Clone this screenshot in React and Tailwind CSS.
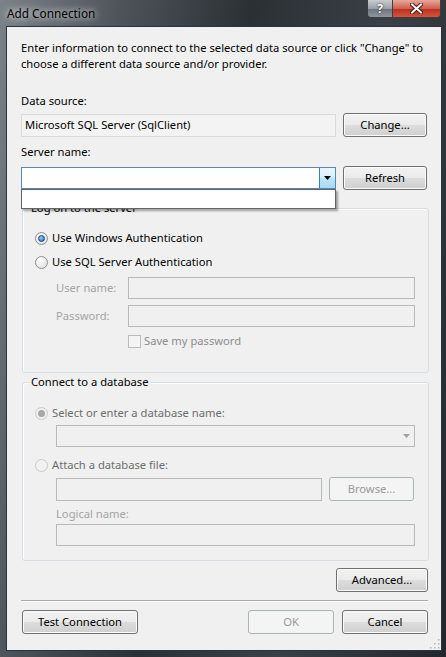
import React from 'react';

const font = "font-['Segoe_UI','Noto_Sans',sans-serif] text-[11.2px] leading-[16px]";

const btn =
  'flex items-center justify-center rounded-[3px] border border-[#707070] bg-[linear-gradient(to_bottom,#f2f2f2_0%,#ebebeb_50%,#dddddd_50%,#cfcfcf_100%)] shadow-[inset_0_0_0_1px_#fbfbfb] text-black';
const btnOff =
  'flex items-center justify-center rounded-[3px] border border-[#adb2b5] bg-[#f4f4f4] text-[#9a9a9a]';
const boxOff = 'border border-[#b9b9b9] bg-[#f0f0f0]';

const Radio = ({ checked, disabled }) => (
  <span
    className={`relative inline-flex h-[13px] w-[13px] items-center justify-center rounded-full border ${
      disabled
        ? 'border-[#c9c9c9] bg-[#f1f1f1]'
        : 'border-[#8e8f8f] bg-[radial-gradient(circle_at_35%_35%,#ffffff,#d9dadb)]'
    }`}
  >
    {checked && (
      <span
        className={`h-[7px] w-[7px] rounded-full ${
          disabled
            ? 'bg-[#a7a7a7]'
            : 'bg-[radial-gradient(circle_at_40%_35%,#8fd3ff,#1c5ea8)] border border-[#1a4a80]'
        }`}
      />
    )}
  </span>
);

const Legend = ({ children }) => (
  <span className="absolute left-[7px] top-[-9px] bg-[#f0f0f0] px-[1px] text-black">{children}</span>
);

export default function App() {
  return (
    <div
      className={`${font} relative h-[657px] w-[446px] overflow-hidden bg-[linear-gradient(100deg,#7c8287_0%,#4d5358_22%,#2b3035_45%,#3a4045_70%,#23272b_100%)]`}
    >
      {/* title bar */}
      <div className="flex h-[26px] items-start justify-between">
        <span className="ml-[7px] mt-[5px] text-[11.8px] text-black [text-shadow:0_0_6px_#ffffffcc,0_0_10px_#ffffff99]">
          Add Connection
        </span>
        <div className="mr-[5px] flex">
          <div className="flex h-[18px] w-[26px] items-center justify-center rounded-bl-[4px] border border-t-0 border-[#3a3f44] bg-[linear-gradient(to_bottom,#c8cdd1_0%,#9aa1a7_50%,#6c737a_51%,#8e969c_100%)] text-[12px] font-bold text-white [text-shadow:0_0_2px_#000]">
            ?
          </div>
          <div className="flex h-[18px] w-[48px] items-center justify-center rounded-br-[4px] border border-l-0 border-t-0 border-[#3a3f44] bg-[linear-gradient(to_bottom,#e7a89c_0%,#d0604e_50%,#b8301d_51%,#d5523b_100%)]">
            <svg width="13" height="11" viewBox="0 0 13 11">
              <path d="M2 1.5 L11 9.5 M11 1.5 L2 9.5" stroke="#3a1a14" strokeWidth="4" strokeLinecap="square" />
              <path d="M2 1.5 L11 9.5 M11 1.5 L2 9.5" stroke="#ffffff" strokeWidth="2" strokeLinecap="square" />
            </svg>
          </div>
        </div>
      </div>

      {/* client area */}
      <div className="relative ml-[6px] h-[625px] w-[436px] border border-[#2a3440] bg-[#f0f0f0]">
        <div className="ml-[14px] mt-[13px] whitespace-nowrap text-black">
          Enter information to connect to the selected data source or click "Change" to
          <br />
          choose a different data source and/or provider.
        </div>

        <div className="ml-[14px] mt-[21px] text-black">Data source:</div>
        <div className="ml-[14px] mt-[4px] flex items-center">
          <div className="flex h-[23px] w-[315px] items-center border border-[#dadada] bg-[#f3f3f3] pl-[3px] text-black">
            Microsoft SQL Server (SqlClient)
          </div>
          <div className={`${btn} ml-[7px] h-[24px] w-[84px]`}>Change...</div>
        </div>

        <div className="ml-[14px] mt-[7px] text-black">Server name:</div>
        <div className="ml-[14px] mt-[6px] flex items-center">
          <div className="relative h-[22px] w-[315px] border border-[#5a87b4] bg-white">
            <div className="absolute right-0 top-0 flex h-[20px] w-[16px] items-center justify-center border-l border-[#3c7fb1] bg-[linear-gradient(to_bottom,#eaf6fd_0%,#d9f0fc_45%,#bee6fd_50%,#a7d9f5_100%)]">
              <svg width="7" height="4" viewBox="0 0 7 4">
                <path d="M0 0 H7 L3.5 4 Z" fill="#000" />
              </svg>
            </div>
            <div className="absolute left-[-1px] top-[21px] z-10 h-[20px] w-[315px] border border-[#646464] bg-white shadow-[2px_2px_2px_rgba(0,0,0,0.35)]" />
          </div>
          <div className={`${btn} ml-[7px] h-[24px] w-[84px]`}>Refresh</div>
        </div>

        {/* log on group */}
        <div className="relative ml-[15px] mt-[18px] h-[165px] w-[407px] rounded-[3px] border border-[#d5dfe5] shadow-[inset_1px_1px_0_#ffffff]">
          <Legend>Log on to the server</Legend>
          <div className="ml-[12px] mt-[21px] flex items-center gap-[4px] text-black">
            <Radio checked />
            <span>Use Windows Authentication</span>
          </div>
          <div className="ml-[12px] mt-[8px] flex items-center gap-[4px] text-black">
            <Radio />
            <span>Use SQL Server Authentication</span>
          </div>
          <div className="mt-[7px] flex items-center">
            <span className="ml-[33px] w-[72px] text-[#a3a3a3]">User name:</span>
            <div className={`${boxOff} h-[22px] w-[287px]`} />
          </div>
          <div className="mt-[6px] flex items-center">
            <span className="ml-[33px] w-[72px] text-[#a3a3a3]">Password:</span>
            <div className={`${boxOff} h-[22px] w-[287px]`} />
          </div>
          <div className="ml-[105px] mt-[6px] flex items-center gap-[3px] text-[#8d8d8d]">
            <span className="h-[13px] w-[13px] border border-[#bcbcbc] bg-[#f4f4f4]" />
            <span>Save my password</span>
          </div>
        </div>

        {/* database group */}
        <div className="relative ml-[15px] mt-[9px] h-[179px] w-[407px] rounded-[3px] border border-[#d5dfe5] shadow-[inset_1px_1px_0_#ffffff]">
          <Legend>Connect to a database</Legend>
          <div className="ml-[12px] mt-[22px] flex items-center gap-[4px] text-[#6d6d6d]">
            <Radio checked disabled />
            <span>Select or enter a database name:</span>
          </div>
          <div className={`${boxOff} relative ml-[33px] mt-[4px] h-[22px] w-[359px]`}>
            <svg className="absolute right-[4px] top-[8px]" width="7" height="4" viewBox="0 0 7 4">
              <path d="M0 0 H7 L3.5 4 Z" fill="#a0a0a0" />
            </svg>
          </div>
          <div className="ml-[12px] mt-[10px] flex items-center gap-[4px] text-[#6d6d6d]">
            <Radio disabled />
            <span>Attach a database file:</span>
          </div>
          <div className="ml-[33px] mt-[4px] flex items-center">
            <div className={`${boxOff} h-[23px] w-[266px]`} />
            <div className={`${btnOff} ml-[7px] h-[24px] w-[85px] text-[#6d6d6d]`}>Browse...</div>
          </div>
          <div className="ml-[33px] mt-[5px] text-[#a3a3a3]">Logical name:</div>
          <div className={`${boxOff} ml-[33px] mt-[2px] h-[22px] w-[359px]`} />
        </div>

        <div className="mr-[13px] mt-[7px] flex justify-end">
          <div className={`${btn} h-[24px] w-[92px]`}>Advanced...</div>
        </div>

        <div className="ml-[14px] mt-[8px] h-[2px] w-[407px] border-t border-[#a9a9a9] bg-white" />

        <div className="ml-[15px] mt-[8px] flex items-center">
          <div className={`${btn} h-[24px] w-[116px]`}>Test Connection</div>
          <div className={`${btnOff} ml-[110px] h-[24px] w-[86px]`}>OK</div>
          <div className={`${btn} ml-[8px] h-[24px] w-[86px]`}>Cancel</div>
        </div>

        {/* size grip */}
        <svg className="absolute bottom-[1px] right-[1px]" width="11" height="11" viewBox="0 0 11 11">
          {[
            [9, 1], [9, 5], [5, 5], [9, 9], [5, 9], [1, 9],
          ].map(([x, y]) => (
            <rect key={`${x}-${y}`} x={x} y={y} width="1.5" height="1.5" fill="#b8b8b8" />
          ))}
        </svg>
      </div>
    </div>
  );
}
